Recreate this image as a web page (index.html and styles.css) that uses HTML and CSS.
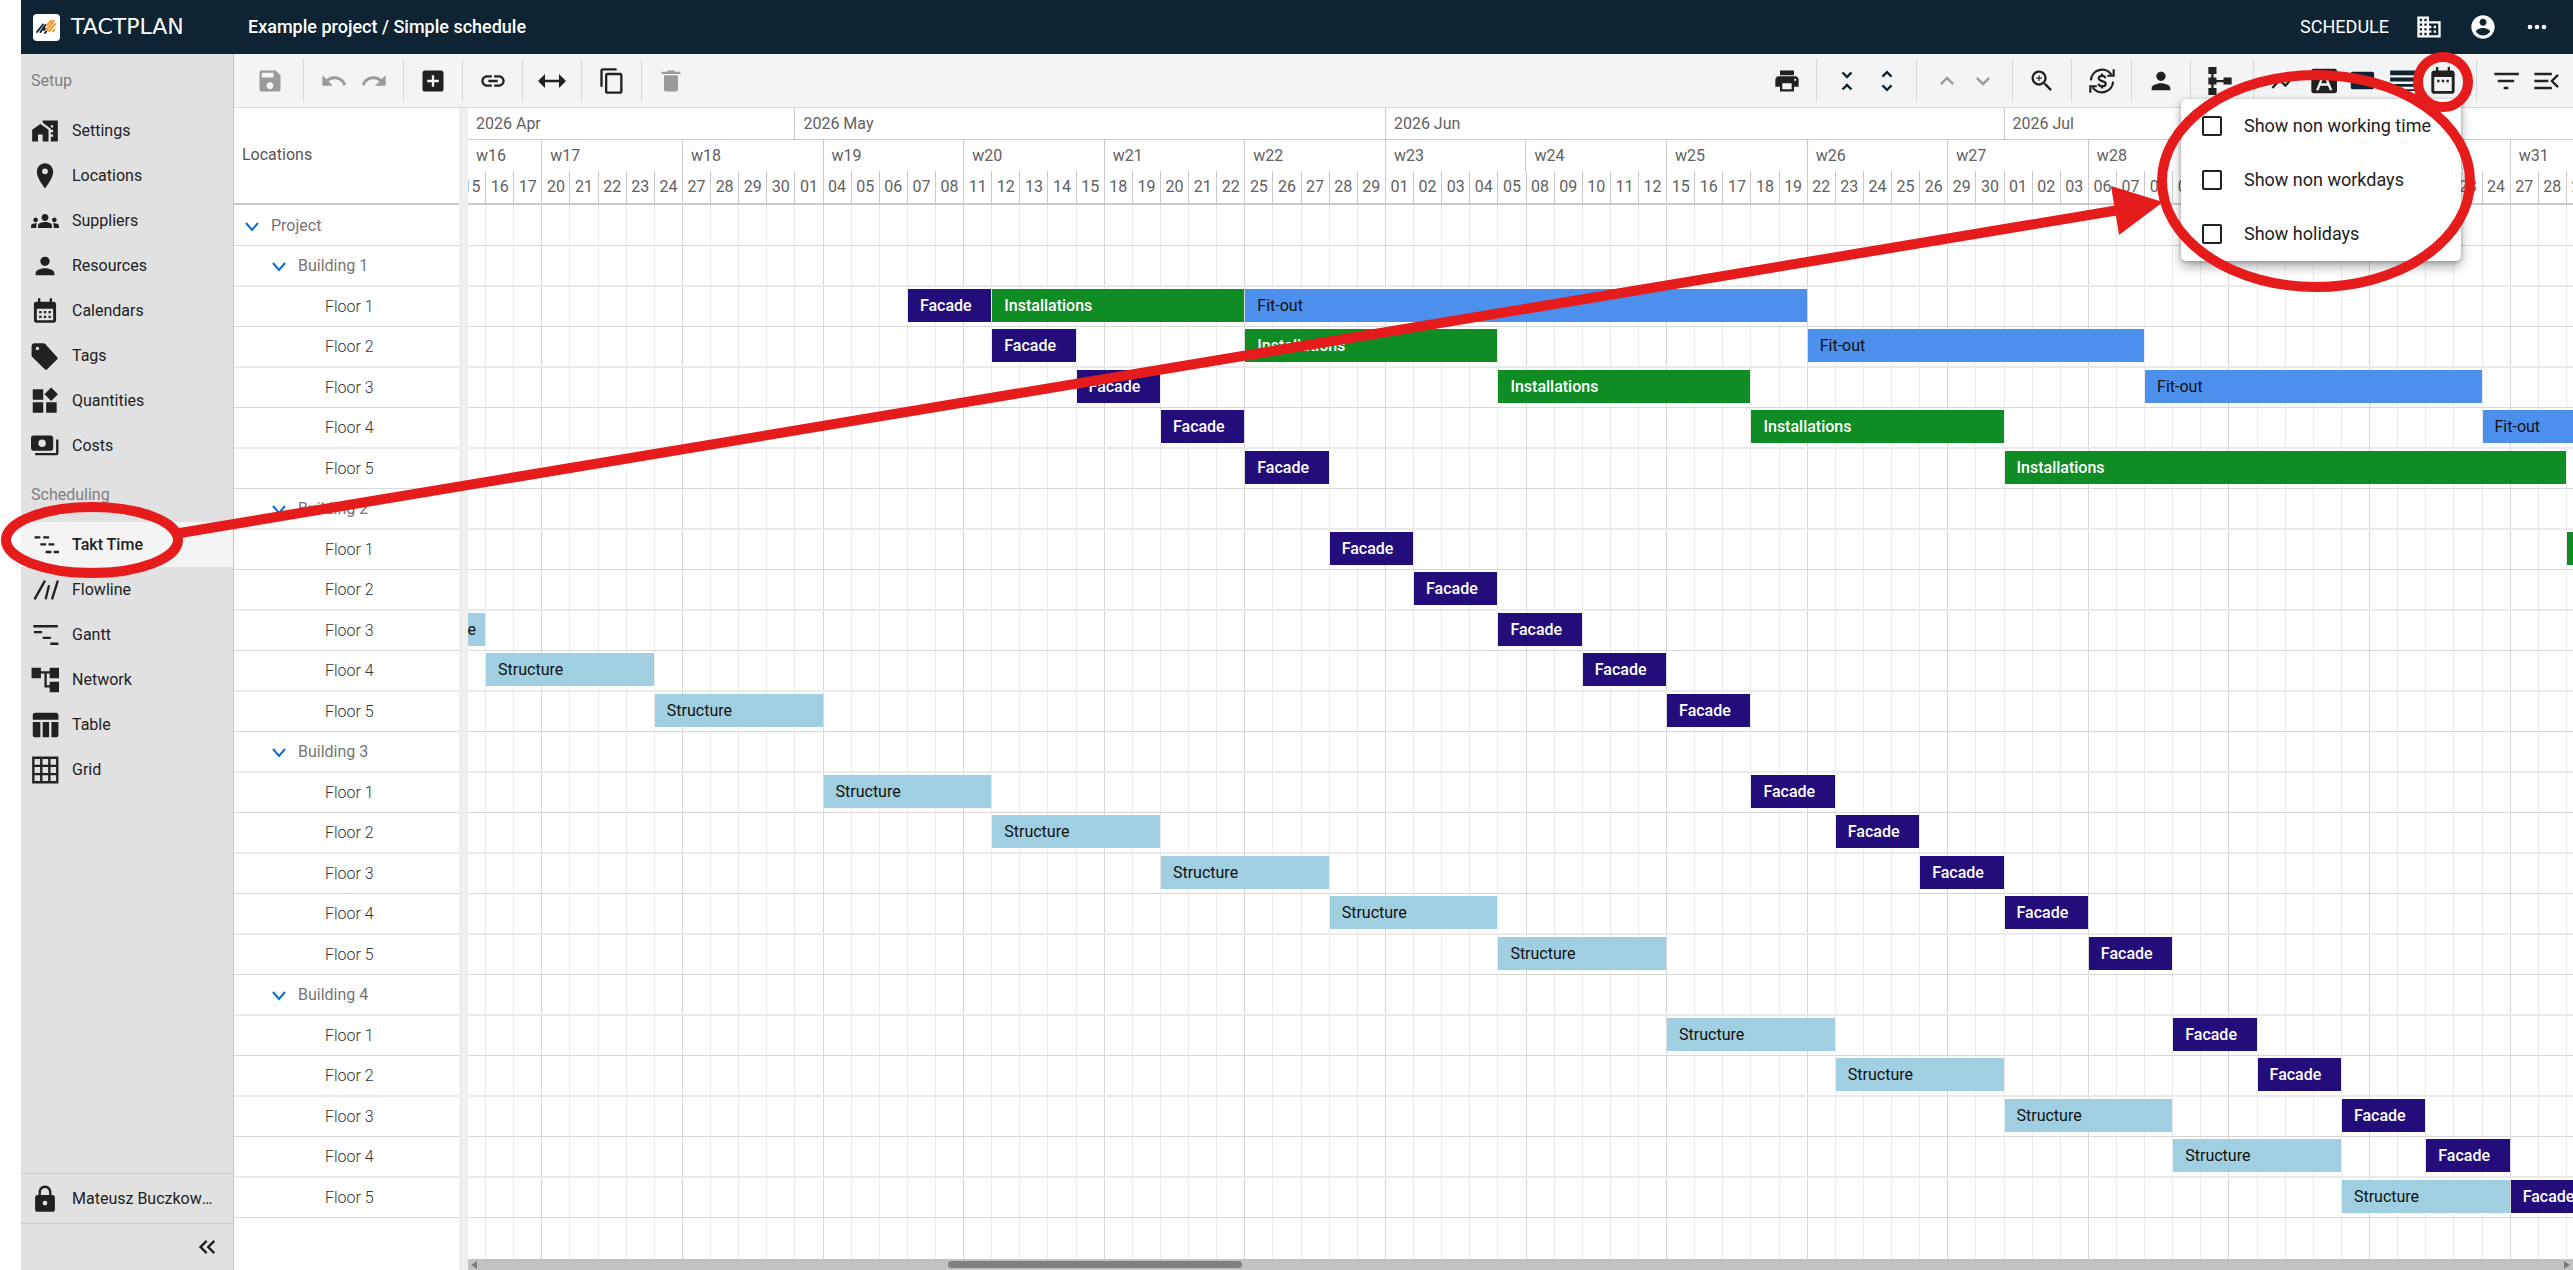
FILE: index.html
```html
<!DOCTYPE html>
<html lang="en">
<head>
<meta charset="utf-8">
<meta name="viewport" content="width=device-width, initial-scale=1">
<title>Tactplan – Example project / Simple schedule</title>
<link rel="stylesheet" href="styles.css">
</head>
<body>
<header class="topbar">
  <a class="brand" href="#" aria-label="Tactplan home">
    <svg class="brand-mark" viewBox="0 0 27 27"><rect width="27" height="27" rx="4" fill="#fff"/><g fill="none" stroke-width="2" stroke-linecap="round"><path stroke="#0f2433" d="M4 18L10 10.500M7.500 18L12.500 11M11 16L12 14.500M12 19L13.500 17"/><path stroke="#f29a2e" d="M14 11L18.500 6.500M13.500 15.500L21 7M16 17L22 10M20 17.500L21.500 15.500"/></g></svg>
    <span class="brand-name">TACTPLAN</span>
  </a>
  <h1 class="project-title">Example project / Simple schedule</h1>
  <nav class="top-actions" aria-label="Account">
    <a class="top-link" href="#">SCHEDULE</a>
    <button class="top-button" type="button" aria-label="Company"><svg class="icon" viewBox="0 0 24 24"><path d="M12 7V3H2v18h20V7H12zM6 19H4v-2h2v2zm0-4H4v-2h2v2zm0-4H4V9h2v2zm0-4H4V5h2v2zm4 12H8v-2h2v2zm0-4H8v-2h2v2zm0-4H8V9h2v2zm0-4H8V5h2v2zm10 12h-8v-2h2v-2h-2v-2h2v-2h-2V9h8v10zm-2-8h-2v2h2v-2zm0 4h-2v2h2v-2z"/></svg></button>
    <button class="top-button" type="button" aria-label="Profile"><svg class="icon" viewBox="0 0 24 24"><path d="M12 2C6.480 2 2 6.480 2 12s4.480 10 10 10 10-4.480 10-10S17.520 2 12 2zm0 3c1.660 0 3 1.340 3 3s-1.340 3-3 3-3-1.340-3-3 1.340-3 3-3zm0 14.200c-2.500 0-4.710-1.280-6-3.220.030-1.990 4-3.080 6-3.080 1.990 0 5.970 1.090 6 3.080-1.290 1.940-3.500 3.220-6 3.220z"/></svg></button>
    <button class="top-button" type="button" aria-label="More"><svg class="icon" viewBox="0 0 24 24"><circle cx="6" cy="12" r="2"/><circle cx="12" cy="12" r="2"/><circle cx="18" cy="12" r="2"/></svg></button>
  </nav>
</header>

<div class="app">
  <aside class="sidebar">
    <nav class="side-nav" aria-label="Project">
      <h2 class="side-heading">Setup</h2>
      <a class="side-link" href="#"><svg class="icon" viewBox="0 0 24 24"><path d="M1 11v10h5v-6h4v6h5V11L8 6zM10 3v1.970l7 5V11h2v2h-2v2h2v2h-2v4h6V3H10zm9 6h-2V7h2v2z"/></svg>Settings</a>
      <a class="side-link" href="#"><svg class="icon" viewBox="0 0 24 24"><path d="M12 1C8 1 5 4 5 8.500c0 5.500 7 14 7 14s7-8.500 7-14C19 4 16 1 12 1zm0 9.500a2.500 2.500 0 1 1 0-5 2.500 2.500 0 0 1 0 5z"/></svg>Locations</a>
      <a class="side-link" href="#"><svg class="icon" viewBox="0 0 24 24"><path d="M12 12.750c1.630 0 3.070.390 4.240.900 1.080.480 1.760 1.560 1.760 2.730V18H6v-1.610c0-1.180.680-2.260 1.760-2.730 1.170-.520 2.610-.910 4.240-.910zM4 13c1.100 0 2-.900 2-2s-.900-2-2-2-2 .900-2 2 .900 2 2 2zm1.130 1.100c-.370-.060-.740-.100-1.130-.100-.990 0-1.930.210-2.780.580C.480 14.900 0 15.620 0 16.430V18h4.500v-1.610c0-.830.230-1.610.630-2.290zM20 13c1.100 0 2-.900 2-2s-.900-2-2-2-2 .900-2 2 .900 2 2 2zm4 3.430c0-.810-.480-1.530-1.220-1.850-.850-.370-1.790-.580-2.780-.580-.390 0-.760.040-1.130.100.400.680.630 1.460.630 2.290V18H24v-1.570zM12 6c1.660 0 3 1.340 3 3s-1.340 3-3 3-3-1.340-3-3 1.340-3 3-3z"/></svg>Suppliers</a>
      <a class="side-link" href="#"><svg class="icon" viewBox="0 0 24 24"><path d="M12 12c2.210 0 4-1.790 4-4s-1.790-4-4-4-4 1.790-4 4 1.790 4 4 4zm0 2c-2.670 0-8 1.340-8 4v2h16v-2c0-2.660-5.330-4-8-4z"/></svg>Resources</a>
      <a class="side-link" href="#"><svg class="icon" viewBox="0 0 24 24"><path d="M19 4h-1V1h-2v3H8V1H6v3H4.500A2 2 0 0 0 2.500 6v14c0 1.100.890 2 2 2h15c1.100 0 2-.900 2-2V6c0-1.100-.900-2-2-2zm0 16H5V10h14v10zM9 14H7v-2h2v2zm4 0h-2v-2h2v2zm4 0h-2v-2h2v2zm-8 4H7v-2h2v2zm4 0h-2v-2h2v2zm4 0h-2v-2h2v2z"/></svg>Calendars</a>
      <a class="side-link" href="#"><svg class="icon" viewBox="0 0 24 24"><path d="M5.500 7A1.500 1.500 0 1 1 5.500 4a1.500 1.500 0 0 1 0 3m17 6L12 1.500c-.400-.350-.900-.500-1.400-.500H3C1.500 1 .500 2 .500 3.500v8c0 .500.200 1 .600 1.400L12 23.500c.500.500 1.200.500 1.700 0l8.800-8.800c.500-.500.500-1.200 0-1.700z"/></svg>Tags</a>
      <a class="side-link" href="#"><svg class="icon" viewBox="0 0 24 24"><path d="M1.500 2h9v9h-9zM1.500 13h9v9h-9zM13 13h9v9h-9zM17.300.500L11.500 6.300l5.800 5.800 5.800-5.800z"/></svg>Quantities</a>
      <a class="side-link" href="#"><svg class="icon" viewBox="0 0 24 24"><path d="M19 14V5c0-1.100-.900-2-2-2H2C.900 3 0 3.900 0 5v9c0 1.100.900 2 2 2h15c1.100 0 2-.900 2-2zm-9.500-1.200a3.200 3.200 0 1 1 0-6.400 3.200 3.200 0 0 1 0 6.400zM23.500 6.500V18c0 1.100-.900 2-2 2H3.500v-2h18V6.500z"/></svg>Costs</a>
      <h2 class="side-heading">Scheduling</h2>
      <a class="side-link current" href="#" aria-current="page"><svg class="icon" viewBox="0 0 24 24"><path d="M3 4.500h5v2H3zM10.500 4.500h5v2h-5zM8 10.500h5v2H8zM15 10.500h5v2h-5zM12.500 17h5v2h-5zM19.500 17h5v2h-5z"/></svg>Takt Time</a>
      <a class="side-link" href="#"><svg class="icon" viewBox="0 0 24 24"><path fill="none" stroke="currentColor" stroke-width="2" d="M3 20L12 4M12.500 20L15.500 8M18 20L23 4"/></svg>Flowline</a>
      <a class="side-link" href="#"><svg class="icon" viewBox="0 0 24 24"><path d="M2 3.500h21v2H2zM2.500 8.500h7v2h-7zM10 13.500h7v2h-7zM16.500 18.500h7v2h-7z"/></svg>Gantt</a>
      <a class="side-link" href="#"><svg class="icon" viewBox="0 0 24 24"><path d="M24 10.500V1.500h-8V4.500H8.500v-3H.500v9h8v-4h3V18.500h4.500v4h8v-9h-8v3h-2.500v-10H16v4z"/></svg>Network</a>
      <a class="side-link" href="#"><svg class="icon" viewBox="0 0 24 24"><path d="M10 9.500h5.500V22.500H10zM17.500 22.500H21.500c1.100 0 2-.900 2-2V9.500h-6zM21.500 1.500h-18c-1.100 0-2 .900-2 2v4h22v-4c0-1.100-.900-2-2-2zM1.500 20.500c0 1.100.900 2 2 2H8V9.500H1.500z"/></svg>Table</a>
      <a class="side-link" href="#"><svg class="icon" viewBox="0 0 24 24"><path fill="none" stroke="currentColor" stroke-width="2" d="M2 1.500h20.500v21H2zM2 8.500h20.500M2 15.500h20.500M8.800 1.500v21M15.700 1.500v21"/></svg>Grid</a>
    </nav>
    <a class="side-link side-user" href="#"><svg class="icon" viewBox="0 0 24 24"><path d="M18.500 8.500h-1V6c0-3-2.500-5.500-5.500-5.500S6.500 3 6.500 6v2.500h-1c-1.100 0-2 .900-2 2V21c0 1.100.900 2 2 2h13c1.100 0 2-.900 2-2V10.500c0-1.100-.900-2-2-2zM12 17.500a2 2 0 1 1 0-4 2 2 0 0 1 0 4zm3.500-9h-7V6c0-1.900 1.600-3.500 3.500-3.500s3.500 1.600 3.500 3.500z"/></svg><span class="user-name">Mateusz Buczkowski</span></a>
    <button class="side-collapse" type="button" aria-label="Collapse sidebar"><svg class="icon" viewBox="0 0 24 24"><path d="M17.590 18L19 16.590 14.420 12 19 7.410 17.590 6l-6 6zM11 18l1.410-1.410L7.830 12l4.580-4.590L11 6l-6 6z"/></svg></button>
  </aside>

  <main class="workspace">
    <div class="toolbar" role="toolbar" aria-label="Schedule tools">
      <div class="tool-group roomy">
        <button class="tool" type="button" aria-label="Save" disabled><svg class="icon" viewBox="0 0 24 24"><path d="M17 3H5c-1.110 0-2 .900-2 2v14c0 1.100.890 2 2 2h14c1.100 0 2-.900 2-2V7l-4-4zm-5 16c-1.660 0-3-1.340-3-3s1.340-3 3-3 3 1.340 3 3-1.340 3-3 3zm3-10H5V5h10v4z"/></svg></button>
      </div>
      <div class="tool-group">
        <button class="tool" type="button" aria-label="Undo" disabled><svg class="icon" viewBox="0 0 24 24"><path d="M12.500 8c-2.650 0-5.050.990-6.900 2.600L2 7v9h9l-3.620-3.620c1.390-1.160 3.160-1.880 5.120-1.880 3.540 0 6.550 2.310 7.600 5.500l2.370-.780C21.080 11.030 17.150 8 12.500 8z"/></svg></button>
        <button class="tool" type="button" aria-label="Redo" disabled><svg class="icon" viewBox="0 0 24 24"><path d="M18.400 10.600C16.550 8.990 14.150 8 11.500 8c-4.650 0-8.580 3.030-9.960 7.220L3.900 16c1.050-3.190 4.050-5.500 7.600-5.500 1.950 0 3.730.720 5.120 1.880L13 16h9V7l-3.600 3.600z"/></svg></button>
      </div>
      <div class="tool-group">
        <button class="tool" type="button" aria-label="Add"><svg class="icon" viewBox="0 0 24 24"><path d="M19 3H5c-1.110 0-2 .900-2 2v14c0 1.100.890 2 2 2h14c1.100 0 2-.900 2-2V5c0-1.100-.900-2-2-2zm-2 10h-4v4h-2v-4H7v-2h4V7h2v4h4v2z"/></svg></button>
      </div>
      <div class="tool-group">
        <button class="tool" type="button" aria-label="Link"><svg class="icon" viewBox="0 0 24 24"><path d="M3.900 12c0-1.710 1.390-3.100 3.100-3.100h4V7H7c-2.760 0-5 2.240-5 5s2.240 5 5 5h4v-1.900H7c-1.710 0-3.100-1.390-3.100-3.100zM8 13h8v-2H8v2zm9-6h-4v1.900h4c1.710 0 3.100 1.390 3.100 3.100s-1.390 3.100-3.100 3.100h-4V17h4c2.760 0 5-2.240 5-5s-2.240-5-5-5z"/></svg></button>
      </div>
      <div class="tool-group">
        <button class="tool" type="button" aria-label="Move"><svg class="icon" viewBox="0 0 24 24"><path d="M0 12l6-6v5h12V6l6 6-6 6v-5H6v5z"/></svg></button>
      </div>
      <div class="tool-group">
        <button class="tool" type="button" aria-label="Copy"><svg class="icon" viewBox="0 0 24 24"><path d="M16 1H4c-1.100 0-2 .900-2 2v14h2V3h12V1zm3 4H8c-1.100 0-2 .900-2 2v14c0 1.100.900 2 2 2h11c1.100 0 2-.900 2-2V7c0-1.100-.900-2-2-2zm0 16H8V7h11v14z"/></svg></button>
      </div>
      <div class="tool-group open">
        <button class="tool" type="button" aria-label="Delete" disabled><svg class="icon" viewBox="0 0 24 24"><path d="M6 19c0 1.100.900 2 2 2h8c1.100 0 2-.900 2-2V7H6v12zM20 4h-4.500l-1-1h-5l-1 1H4v2h16V4z"/></svg></button>
      </div>
      <div class="tool-group push">
        <button class="tool" type="button" aria-label="Print"><svg class="icon" viewBox="0 0 24 24"><path d="M19 8H5c-1.660 0-3 1.340-3 3v6h4v4h12v-4h4v-6c0-1.660-1.340-3-3-3zm-3 11H8v-5h8v5zm3-7c-.550 0-1-.450-1-1s.450-1 1-1 1 .450 1 1-.450 1-1 1zm-1-9H6v4h12V3z"/></svg></button>
      </div>
      <div class="tool-group wide">
        <button class="tool navy" type="button" aria-label="Collapse rows"><svg class="icon" viewBox="0 0 24 24"><path d="M7.410 18.590L8.830 20 12 16.830 15.170 20l1.410-1.410L12 14l-4.590 4.590zm9.180-13.180L15.170 4 12 7.170 8.830 4 7.410 5.410 12 10l4.590-4.590z"/></svg></button>
        <button class="tool navy" type="button" aria-label="Expand rows"><svg class="icon" viewBox="0 0 24 24"><path d="M12 5.830L15.170 9l1.410-1.410L12 3 7.410 7.590 8.830 9 12 5.830zm0 12.340L8.830 15l-1.410 1.410L12 21l4.590-4.590L15.170 15 12 18.170z"/></svg></button>
      </div>
      <div class="tool-group narrow">
        <button class="tool" type="button" aria-label="Move up" disabled><svg class="icon" viewBox="0 0 24 24"><path d="M12 8l-6 6 1.410 1.410L12 10.830l4.590 4.580L18 14z"/></svg></button>
        <button class="tool" type="button" aria-label="Move down" disabled><svg class="icon" viewBox="0 0 24 24"><path d="M16.590 8.590L12 13.170 7.410 8.590 6 10l6 6 6-6z"/></svg></button>
      </div>
      <div class="tool-group">
        <button class="tool" type="button" aria-label="Zoom in"><svg class="icon" viewBox="0 0 24 24"><path d="M15.500 14h-.790l-.280-.270C15.410 12.590 16 11.110 16 9.500 16 5.910 13.090 3 9.500 3S3 5.910 3 9.500 5.910 16 9.500 16c1.610 0 3.090-.590 4.230-1.570l.270.280v.790l5 4.990L20.490 19l-4.990-5zm-6 0C7.010 14 5 11.990 5 9.500S7.010 5 9.500 5 14 7.010 14 9.500 11.990 14 9.500 14zm2.500-4h-2v2H9v-2H7V9h2V7h1v2h2v1z"/></svg></button>
      </div>
      <div class="tool-group wide">
        <button class="tool" type="button" aria-label="Currency"><svg class="icon" viewBox="0 0 24 24"><g fill="none" stroke="currentColor" stroke-width="1.900"><path d="M2.500 11.500A9.600 9.600 0 0 1 20 6.500M22 2v5.500h-5.500M21.500 12.500A9.600 9.600 0 0 1 4 17.500M2 22v-5.500h5.500"/><path d="M15 9.500C14.500 8 13.500 7.600 12 7.600c-1.500 0-2.800.700-2.800 2.100 0 3.200 6 1.500 6 4.700 0 1.500-1.400 2.200-3 2.200s-2.900-.700-3.300-2.200M12 5.500v2M12 16.500v2"/></g></svg></button>
      </div>
      <div class="tool-group">
        <button class="tool" type="button" aria-label="Assignees"><svg class="icon" viewBox="0 0 24 24"><path d="M12 12c2.210 0 4-1.790 4-4s-1.790-4-4-4-4 1.790-4 4 1.790 4 4 4zm0 2c-2.670 0-8 1.340-8 4v2h16v-2c0-2.660-5.330-4-8-4z"/></svg></button>
      </div>
      <div class="tool-group roomy">
        <button class="tool" type="button" aria-label="Hierarchy"><svg class="icon" viewBox="0 0 24 24"><path d="M2 0h7v6H6.500v3H9v2.200h6V9h7v6h-7v-2H9v2H6.500v3H9v6H2v-6h2.500v-3H2V9h2.500V6H2z"/></svg></button>
      </div>
      <div class="tool-group roomy">
        <button class="tool" type="button" aria-label="Progress line"><svg class="icon" viewBox="0 0 24 24"><path fill="none" stroke="currentColor" stroke-width="2" d="M3 18l6-7 5 5 7-8"/></svg></button>
        <button class="tool" type="button" aria-label="Labels"><svg class="icon" viewBox="0 0 24 24"><path d="M4 1.500h18a2 2 0 0 1 2 2v17a2 2 0 0 1-2 2H4a2 2 0 0 1-2-2v-17a2 2 0 0 1 2-2zM6 20h2.200l1.500-4h6.600l1.500 4H20L14 5h-2zM10.500 14L13 7.500l2.500 6.500z"/></svg></button>
        <button class="tool navy" type="button" aria-label="Bar style"><svg class="icon" viewBox="0 0 24 24"><path d="M3 4h17a1.500 1.500 0 0 1 1.500 1.500v12A1.500 1.500 0 0 1 20 19H3a1.500 1.500 0 0 1-1.500-1.500v-12A1.500 1.500 0 0 1 3 4z"/></svg></button>
        <button class="tool navy" type="button" aria-label="Row density"><svg class="icon" viewBox="0 0 24 24"><path d="M1 3h22v4H1zM1 9h22v3.500H1zM1 14.500h22v2.500H1zM1 19h22v1.500H1z"/></svg></button>
        <div class="menu-anchor">
          <button class="tool" type="button" aria-label="Calendar display" aria-expanded="true" aria-controls="calendar-menu"><svg class="icon" viewBox="0 0 24 24"><path d="M9 11H7v2h2v-2zm4 0h-2v2h2v-2zm4 0h-2v2h2v-2zM19.500 3H18V0h-2v3H8V0H6v3H4.500c-1.400 0-2.500.900-2.500 2.500v15c0 1.500 1 2.500 2.500 2.500h15c1.400 0 2.500-1 2.500-2.500v-15C22 4 21 3 19.500 3zM19.500 20.500H4.500V8.500h15z"/></svg></button>
          <div class="menu" id="calendar-menu">
            <label class="menu-item"><input class="tick" type="checkbox">Show non working time</label>
            <label class="menu-item"><input class="tick" type="checkbox">Show non workdays</label>
            <label class="menu-item"><input class="tick" type="checkbox">Show holidays</label>
          </div>
        </div>
      </div>
      <div class="tool-group last">
        <button class="tool" type="button" aria-label="Filter"><svg class="icon" viewBox="0 0 24 24"><path d="M10 19h4v-2h-4v2zM2 5v2h21V5H2zm3 8h14v-2H5v2z"/></svg></button>
        <button class="tool" type="button" aria-label="Open panel"><svg class="icon" viewBox="0 0 24 24"><path d="M2 19h15v-2H2v2zm0-6h12v-2H2v2zM2 5v2h15V5H2zm21 11.600L18.400 12 23 7.400 21.600 6l-6 6 6 6z"/></svg></button>
      </div>
    </div>

    <div class="schedule">
      <section class="locations">
        <h2 class="locations-head">Locations</h2>
        <ul class="tree" id="tree"></ul>
      </section>
      <div class="splitter" role="separator" aria-orientation="vertical"></div>
      <section class="timeline" aria-label="Takt time chart">
        <div class="canvas">
          <div class="months" id="months"></div>
          <div class="weeks" id="weeks"></div>
          <div class="days" id="days"></div>
          <div class="plot">
            <div class="gridlines" id="gridlines"></div>
            <div class="rows" id="rows"></div>
          </div>
        </div>
        <div class="scrollbar"><span class="scroll-arrow left"></span><span class="scroll-thumb"></span><span class="scroll-arrow right"></span></div>
      </section>
    </div>
  </main>
</div>

<svg class="annotations" aria-hidden="true">
  <g fill="none" stroke="#e61c1c" stroke-width="10">
    <ellipse cx="92" cy="540" rx="86" ry="33"/>
    <path d="M180 533L2125 209"/>
    <circle cx="2443" cy="82" r="25"/>
    <ellipse cx="2316" cy="181" rx="154" ry="106"/>
  </g>
  <path fill="#e61c1c" d="M2111 186L2163 202L2119 235z"/>
</svg>
<script src="app.js"></script>
</body>
</html>
```
FILE: styles.css
```css
:root {
  --ink: #212121;
  --muted: #616161;
  --navy: #0f2433;
  --line: #d8d8d8;
  --line-soft: #ebebeb;
  --line-strong: #cacaca;
  --day-count: 76;
}

* {
  box-sizing: border-box;
}

body {
  display: flex;
  flex-direction: column;
  height: 100vh;
  margin: 0;
  padding-left: 21px;
  overflow: hidden;
  background: #fff;
  color: var(--ink);
  font: 400 16px/20px Roboto, "Liberation Sans", sans-serif;
}

button {
  padding: 0;
  border: 0;
  background: none;
  color: inherit;
  font: inherit;
}

a {
  color: inherit;
  text-decoration: none;
}

h1,
h2,
ul {
  margin: 0;
  padding: 0;
  font: inherit;
  list-style: none;
}

.icon {
  display: block;
  flex: none;
  width: 28px;
  height: 28px;
  fill: currentColor;
}

/* Top bar */
.topbar {
  display: flex;
  flex: none;
  align-items: center;
  height: 54px;
  padding: 0 22px 0 12px;
  background: var(--navy);
  color: #fff;
}

.brand {
  display: flex;
  align-items: center;
  gap: 11px;
  width: 215px;
}

.brand-mark {
  width: 27px;
  height: 27px;
}

.brand-name {
  font: 400 22px/24px "DejaVu Sans", sans-serif;
}

.project-title {
  font-size: 18px;
  font-weight: 500;
}

.top-actions {
  display: flex;
  align-items: center;
  gap: 26px;
  margin-left: auto;
}

.top-link {
  font-size: 18px;
}

/* Sidebar */
.app {
  display: flex;
  flex: 1;
  min-height: 0;
}

.sidebar {
  display: flex;
  flex: none;
  flex-direction: column;
  width: 213px;
  border-right: 1px solid #c4c4c4;
  background: #e1e1e1;
}

.side-nav {
  flex: 1;
}

.side-heading {
  padding: 17px 10px;
  color: #7d7d7d;
}

.side-link {
  display: flex;
  align-items: center;
  gap: 13px;
  height: 45px;
  padding: 0 12px 0 10px;
}

.side-link.current {
  background: #f4f4f4;
  font-weight: 500;
}

.side-user {
  height: 50px;
  padding-right: 20px;
  border-top: 1px solid var(--line-strong);
}

.user-name {
  overflow: hidden;
  text-overflow: ellipsis;
  white-space: nowrap;
}

.side-collapse {
  display: flex;
  align-items: center;
  justify-content: flex-end;
  height: 47px;
  padding: 0 12px;
  border-top: 1px solid var(--line-strong);
}

/* Toolbar */
.workspace {
  display: flex;
  flex: 1;
  flex-direction: column;
  min-width: 0;
}

.toolbar {
  display: flex;
  flex: none;
  align-items: center;
  height: 54px;
  padding-left: 7px;
  border-bottom: 1px solid var(--line);
  background: #f4f4f4;
}

.tool-group {
  display: flex;
  align-items: center;
  height: 43px;
  padding: 0 9px;
  border-right: 1px solid var(--line);
}

.tool-group:nth-child(even),
.tool-group.wide {
  padding-left: 10px;
}

.tool-group.open,
.tool-group.last {
  border-right: 0;
}

.tool-group.push {
  margin-left: auto;
}

.tool-group.narrow {
  padding: 0 11px 0 12px;
}

.tool-group.narrow .tool {
  width: 36px;
}

.tool-group.roomy {
  padding: 0 13px 0 9px;
}

.tool-group.last {
  padding: 0 7px 0 9px;
}

.tool {
  display: flex;
  align-items: center;
  justify-content: center;
  width: 40px;
  height: 40px;
}

.tool.navy {
  color: var(--navy);
}

.tool:disabled {
  color: #9a9a9a;
}

/* Calendar menu drops over the chart */
.menu-anchor {
  position: relative;
}

.menu {
  position: absolute;
  z-index: 5;
  top: 38px;
  right: 2px;
  width: 280px;
  border-radius: 5px;
  background: #fff;
  box-shadow: 0 6px 12px rgb(0 0 0 / 30%), 0 1px 4px rgb(0 0 0 / 25%);
}

.menu-item {
  display: flex;
  align-items: center;
  gap: 22px;
  height: 54px;
  padding: 0 21px;
  font-size: 18px;
  white-space: nowrap;
}

.tick {
  flex: none;
  width: 20px;
  height: 20px;
  margin: 0;
  border: 2px solid var(--ink);
  border-radius: 2px;
  appearance: none;
}

.tick:checked {
  background: var(--ink);
}

/* Schedule */
.schedule {
  display: flex;
  flex: 1;
  min-height: 0;
}

.locations {
  flex: none;
  width: 225px;
}

.locations-head {
  height: 97px;
  padding: 37px 8px;
  border-bottom: 2px solid var(--line-strong);
  color: #555;
}

.splitter {
  flex: none;
  width: 9px;
  background: #efefef;
}

.tree,
.rows {
  padding-top: 1px;
}

.tree-row,
.chart-row {
  height: 40px;
  border-bottom: 1px solid var(--line);
}

.tree-row:nth-child(even),
.chart-row:nth-child(even) {
  height: 41px;
  border-bottom: 2px solid var(--line-soft);
}

.tree-row {
  display: flex;
  align-items: center;
  gap: 9px;
  padding-left: 8px;
  color: #757575;
}

.tree-row.level-1 {
  padding-left: 35px;
}

.tree-row.level-2 {
  padding-left: 91px;
  color: #333;
  font-weight: 300;
}

.twisty {
  width: 20px;
  height: 20px;
  color: #0b6bd3;
}

.twisty svg {
  display: block;
  fill: none;
  stroke: currentColor;
  stroke-width: 2;
}

.timeline {
  display: flex;
  flex: 1;
  flex-direction: column;
  min-width: 0;
  overflow: hidden;
}

/* The chart is scrolled part-way into its first and last day */
.canvas {
  display: flex;
  flex: 1;
  flex-direction: column;
  min-height: 0;
  margin: 0 -22px 0 -10px;
}

.months,
.weeks,
.days,
.gridlines,
.chart-row {
  display: grid;
  grid-template-columns: repeat(var(--day-count), minmax(0, 1fr));
}

.months,
.weeks,
.days {
  color: var(--muted);
  white-space: nowrap;
}

.months {
  height: 32px;
  border-bottom: 1px solid var(--line-strong);
}

.month,
.week {
  padding: 6px 8px;
  overflow: hidden;
  border-right: 1px solid var(--line-strong);
}

.month:first-child,
.week:first-child {
  padding-left: 18px;
}

.weeks {
  height: 31px;
}

.days {
  height: 34px;
  border-bottom: 2px solid var(--line-strong);
}

.day {
  padding: 6px 0;
  border-right: 1px solid var(--line-strong);
  text-align: center;
}

.plot {
  display: grid;
  flex: 1;
  min-height: 0;
}

.gridlines,
.rows {
  grid-area: 1 / 1;
}

.gridline {
  border-right: 1px solid var(--line-soft);
}

.gridline.week-end {
  border-color: var(--line);
}

.bar {
  height: 33px;
  margin: 2px 1px 0 0;
  padding: 7px 12px;
  overflow: hidden;
  line-height: 20px;
  white-space: nowrap;
}

.bar.structure {
  background: #9fcfe0;
  color: #111;
}

.bar.facade {
  background: #220d7b;
  color: #fff;
  font-weight: 500;
}

.bar.installations {
  background: #108c24;
  color: #fff;
  font-weight: 500;
}

.bar.fitout {
  background: #4c8fec;
  color: #111;
}

.bar.clipped {
  display: flex;
  justify-content: flex-end;
  padding: 7px 9px;
}

.scrollbar {
  display: flex;
  flex: none;
  align-items: center;
  height: 11px;
  padding: 0 3px;
  background: #c2c2c2;
}

.scroll-arrow {
  border: 4px solid transparent;
}

.scroll-arrow.left {
  border-right: 6px solid #7c7c7c;
  border-left: 0;
}

.scroll-arrow.right {
  margin-left: auto;
  border-right: 0;
  border-left: 6px solid #7c7c7c;
}

.scroll-thumb {
  width: 14%;
  height: 7px;
  margin-left: calc(22% + 9px);
  border-radius: 4px;
  background: #808080;
}

/* Callouts drawn over the page */
.annotations {
  position: absolute;
  z-index: 10;
  inset: 0;
  width: 100%;
  height: 100%;
  pointer-events: none;
}
```
FILE: app.js
```js
// Columns are workdays, starting on Wednesday 15 April 2026.
const DAY_COUNT = 76;
const NAMES = { structure: "Structure", facade: "Facade", installations: "Installations", fitout: "Fit-out" };

// Per floor: [trade, first column, column after the last].
const BUILDINGS = [
  [
    [["facade", 16, 19], ["installations", 19, 28], ["fitout", 28, 48]],
    [["facade", 19, 22], ["installations", 28, 37], ["fitout", 48, 60]],
    [["facade", 22, 25], ["installations", 37, 46], ["fitout", 60, 72]],
    [["facade", 25, 28], ["installations", 46, 55], ["fitout", 72, 76]],
    [["facade", 28, 31], ["installations", 55, 75]]
  ],
  [
    [["facade", 31, 34], ["installations", 75, 76]],
    [["facade", 34, 37]],
    [["structure", 0, 1], ["facade", 37, 40]],
    [["structure", 1, 7], ["facade", 40, 43]],
    [["structure", 7, 13], ["facade", 43, 46]]
  ],
  [
    [["structure", 13, 19], ["facade", 46, 49]],
    [["structure", 19, 25], ["facade", 49, 52]],
    [["structure", 25, 31], ["facade", 52, 55]],
    [["structure", 31, 37], ["facade", 55, 58]],
    [["structure", 37, 43], ["facade", 58, 61]]
  ],
  [
    [["structure", 43, 49], ["facade", 61, 64]],
    [["structure", 49, 55], ["facade", 64, 67]],
    [["structure", 55, 61], ["facade", 67, 70]],
    [["structure", 61, 67], ["facade", 70, 73]],
    [["structure", 67, 73], ["facade", 73, 76]]
  ]
];

function add(parent, tag, className, text) {
  const node = document.createElement(tag);
  node.className = className;
  if (text) node.textContent = text;
  parent.append(node);
  return node;
}

const byId = (id) => document.getElementById(id);
const TWISTY = '<svg viewBox="0 0 20 20"><path d="M4 7l6 7 6-7"/></svg>';

function addLocation(level, text) {
  const item = add(byId("tree"), "li", "tree-row level-" + level);
  if (level < 2) {
    const button = add(item, "button", "twisty");
    button.type = "button";
    button.setAttribute("aria-label", "Collapse " + text);
    button.innerHTML = TWISTY;
  }
  add(item, "span", "tree-name", text);
}

function addChartRow(bars) {
  const row = add(byId("rows"), "div", "chart-row");
  for (const [trade, from, to] of bars) {
    const bar = add(row, "div", "bar " + trade, to - from > 1 || from === 0 ? NAMES[trade] : "");
    if (from === 0) bar.classList.add("clipped");
    bar.style.gridColumn = (from + 1) + " / " + (to + 1);
    bar.style.gridRow = "1";
  }
}

// Header
const date = new Date(2026, 3, 15);
const months = [];
const weeks = [];
for (let i = 0; i < DAY_COUNT; i++) {
  const month = date.toLocaleString("en-US", { month: "short" });
  const isNewWeek = date.getDay() === 1;
  if (!months.length || months.at(-1).month !== month) months.push({ month, days: 0 });
  if (!weeks.length || isNewWeek) weeks.push({ number: 16 + weeks.length, days: 0 });
  months.at(-1).days++;
  weeks.at(-1).days++;
  add(byId("days"), "div", "day", String(date.getDate()).padStart(2, "0"));
  const isFriday = date.getDay() === 5;
  add(byId("gridlines"), "div", isFriday ? "gridline week-end" : "gridline");
  date.setDate(date.getDate() + (isFriday ? 3 : 1));
}
for (const { month, days } of months) {
  add(byId("months"), "div", "month", "2026 " + month).style.gridColumn = "span " + days;
}
for (const { number, days } of weeks) {
  add(byId("weeks"), "div", "week", "w" + number).style.gridColumn = "span " + days;
}

// Rows
addLocation(0, "Project");
addChartRow([]);
BUILDINGS.forEach((floors, index) => {
  addLocation(1, "Building " + (index + 1));
  addChartRow([]);
  floors.forEach((bars, floor) => {
    addLocation(2, "Floor " + (floor + 1));
    addChartRow(bars);
  });
});
```
